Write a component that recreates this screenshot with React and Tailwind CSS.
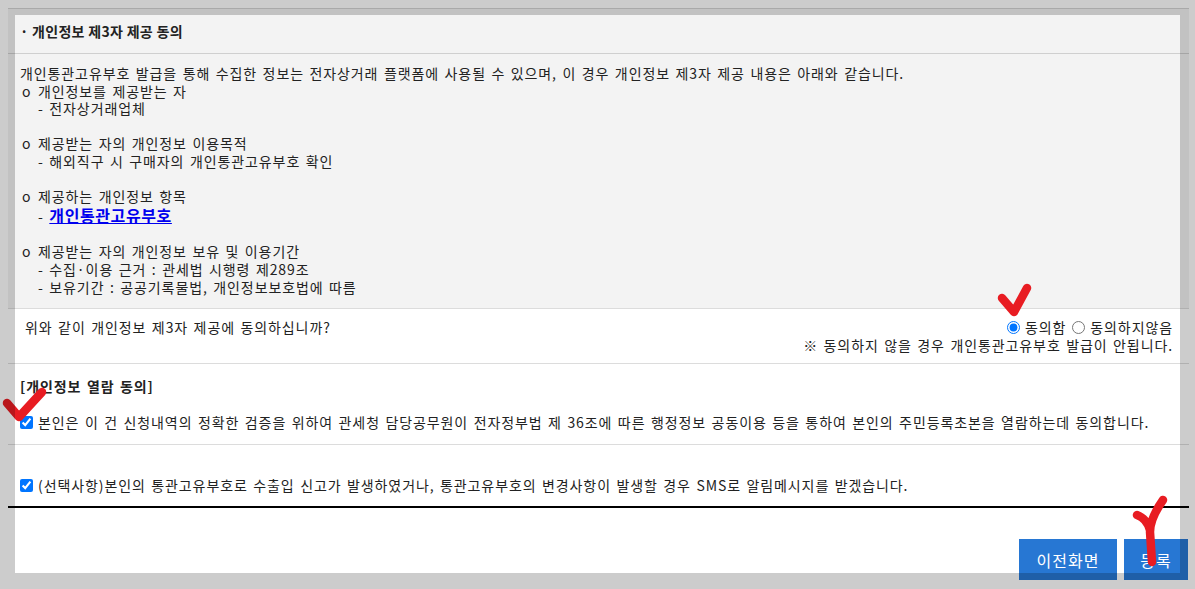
import React from "react";

const Bullet = ({ title, items }) => (
  <div>
    <div className="flex">
      <span className="w-[18px] pl-[2px]">o</span>
      <span>{title}</span>
    </div>
    {items.map((it, i) => (
      <div key={i} className="pl-[18px]">
        - {it}
      </div>
    ))}
  </div>
);

const Check = ({ className, d, w, h }) => (
  <svg className={className} width={w} height={h} viewBox={`0 0 ${w} ${h}`} fill="none">
    <path d={d} stroke="#e81c22" strokeWidth="8.5" strokeLinecap="round" strokeLinejoin="round" />
  </svg>
);

const App = () => {
  return (
    <div className="relative h-[589px] w-[1195px] overflow-hidden bg-white text-[14px] text-[#222] tracking-[0.9px] [word-spacing:1.5px] font-['Noto_Sans_CJK_KR','Noto_Sans',sans-serif]">
      <div className="ml-2 mr-[6px] mt-2 border-t border-[#d4d4d4]">
        <section className="bg-[#f3f3f3] border-b border-[#dcdcdc]">
          <div className="h-[45px] flex items-center px-3 font-bold tracking-[0.3px] [word-spacing:0px] border-b border-[#cfcfcf]">
            · 개인정보 제3자 제공 동의
          </div>
          <div className="px-3 pt-[11px] pb-[12px] leading-[17.6px]">
            <div>
              개인통관고유부호 발급을 통해 수집한 정보는 전자상거래 플랫폼에 사용될 수 있으며, 이 경우 개인정보 제3자 제공 내용은 아래와 같습니다.
            </div>
            <Bullet title="개인정보를 제공받는 자" items={["전자상거래업체"]} />
            <div className="h-[17.6px]" />
            <Bullet title="제공받는 자의 개인정보 이용목적" items={["해외직구 시 구매자의 개인통관고유부호 확인"]} />
            <div className="h-[17.6px]" />
            <div>
              <div className="flex">
                <span className="w-[18px] pl-[2px]">o</span>
                <span>제공하는 개인정보 항목</span>
              </div>
              <div className="pl-[18px] leading-[19px]">
                -{" "}
                <a className="text-[16px] font-bold text-[#0000ee] underline tracking-[0.6px]">개인통관고유부호</a>
              </div>
            </div>
            <div className="h-[17.6px]" />
            <Bullet
              title="제공받는 자의 개인정보 보유 및 이용기간"
              items={["수집·이용 근거 : 관세법 시행령 제289조", "보유기간 : 공공기록물법, 개인정보보호법에 따름"]}
            />
          </div>
        </section>

        <div className="flex justify-between pl-[17px] pr-4 pt-[9px] pb-[9px] leading-[18px] border-b border-[#dcdcdc]">
          <div>위와 같이 개인정보 제3자 제공에 동의하십니까?</div>
          <div className="flex flex-col items-end">
            <div className="flex items-center">
              <input type="radio" name="agree" defaultChecked className="m-0 mr-[5px] w-[13px] h-[13px] accent-[#0075ff]" />
              <span>동의함</span>
              <input type="radio" name="agree" className="m-0 ml-[6px] mr-[5px] w-[13px] h-[13px]" />
              <span>동의하지않음</span>
            </div>
            <div>※ 동의하지 않을 경우 개인통관고유부호 발급이 안됩니다.</div>
          </div>
        </div>

        <div className="px-3 pt-[13px] pb-[13px] border-b border-[#dcdcdc]">
          <div className="font-bold leading-[18px]">[개인정보 열람 동의]</div>
          <label className="mt-[18px] flex items-center leading-[18px]">
            <input type="checkbox" defaultChecked className="m-0 mr-[5px] w-[13px] h-[13px] accent-[#0075ff]" />
            <span>
              본인은 이 건 신청내역의 정확한 검증을 위하여 관세청 담당공무원이 전자정부법 제 36조에 따른 행정정보 공동이용 등을 통하여 본인의 주민등록초본을 열람하는데 동의합니다.
            </span>
          </label>
        </div>

        <div className="px-3 pt-[31px] pb-[12px] border-b-2 border-black">
          <label className="flex items-center leading-[18px]">
            <input type="checkbox" defaultChecked className="m-0 mr-[5px] w-[13px] h-[13px] accent-[#0075ff]" />
            <span>
              (선택사항)본인의 통관고유부호로 수출입 신고가 발생하였거나, 통관고유부호의 변경사항이 발생할 경우 SMS로 알림메시지를 받겠습니다.
            </span>
          </label>
        </div>

        <div className="flex justify-end gap-[7px] pr-[1px] pt-[31px]">
          <button className="h-[41px] w-[98px] bg-[#2777d3] text-white text-[16px] tracking-[1px]">이전화면</button>
          <button className="h-[41px] w-[64px] bg-[#2777d3] text-white text-[16px] tracking-[1px]">등록</button>
        </div>
      </div>

      <Check className="absolute left-[994px] top-[278px]" w={42} h={44} d="M8 20 L20 34 L33 10" />
      <Check className="absolute left-0 top-[384px]" w={50} h={44} d="M7 19 L19 33 L42 8" />
      <Check
        className="absolute left-[1126px] top-[492px]"
        w={46}
        h={78}
        d="M11 23 C17 25 22 31 24 38 M37 8 C30 18 24 30 24 40 L26 70"
      />

      <div className="pointer-events-none absolute left-[15px] top-[15px] w-[1165px] h-[558px] shadow-[0_0_0_2000px_rgba(0,0,0,0.2)]" />
    </div>
  );
};

export default App;
